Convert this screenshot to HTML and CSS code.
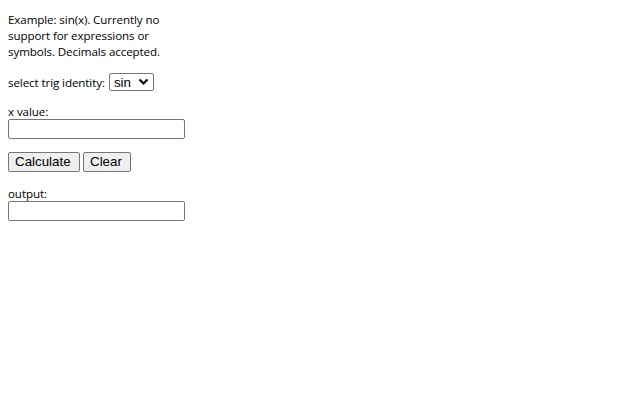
FILE: index.html
```html
<!DOCTYPE html>
<html>
<head>
<meta charset="utf-8">
<link rel="stylesheet" href="styles.css">
</head>
<body>
<div class="page">
  <p class="intro">Example: sin(x). Currently no support for expressions or symbols. Decimals accepted.</p>
  <div class="select-row">
    <span>select trig identity:</span>
    <div class="select"><span>sin</span><svg width="11" height="8" viewBox="0 0 11 8"><path d="M1.5 1.5 L5.5 5.5 L9.5 1.5" fill="none" stroke="#000" stroke-width="2.2"/></svg></div>
  </div>
  <div class="field">
    <span class="label">x value:</span>
    <div class="input"></div>
  </div>
  <div class="buttons">
    <div class="btn calc">Calculate</div>
    <div class="btn clear">Clear</div>
  </div>
  <div class="field">
    <span class="label">output:</span>
    <div class="input"></div>
  </div>
</div>
</body>
</html>
```
FILE: styles.css
```css
html, body { margin: 0; padding: 0; background: #fff; }
body { font-family: "Open Sans", "Noto Sans", sans-serif; font-size: 12px; color: #000; }
.page { display: flex; flex-direction: column; padding: 12px 8px 0 8px; }
.intro { margin: 0; width: 160px; line-height: 16px; font-size: 11.6px; letter-spacing: -0.1px; }
.select-row { margin-top: 13px; display: flex; align-items: center; height: 18px; font-size: 11.6px; letter-spacing: -0.1px; }
.select { margin-left: 4px; width: 43px; height: 16px; border: 1px solid #767676; border-radius: 2px; box-sizing: content-box; display: flex; align-items: center; justify-content: space-between; font-family: "Liberation Sans", Arial, sans-serif; font-size: 13.33px; letter-spacing: 0; }
.select span { margin-left: 4px; }
.select svg { margin-right: 4px; }
.field { display: flex; flex-direction: column; margin-top: 13px; }
.label { line-height: 15px; height: 15px; font-size: 11.6px; letter-spacing: -0.1px; }
.input { width: 175px; height: 18px; border: 1px solid #767676; border-radius: 2px; }
.buttons { display: flex; gap: 3px; margin-top: 13px; }
.btn { height: 18px; border: 1px solid #767676; border-radius: 2px; background: #efefef; font-family: "Liberation Sans", Arial, sans-serif; font-size: 13.33px; line-height: 18px; padding: 0 6px; }
.calc { width: 58px; }
.clear { width: 34px; }
.buttons + .field { margin-top: 14px; }
```
